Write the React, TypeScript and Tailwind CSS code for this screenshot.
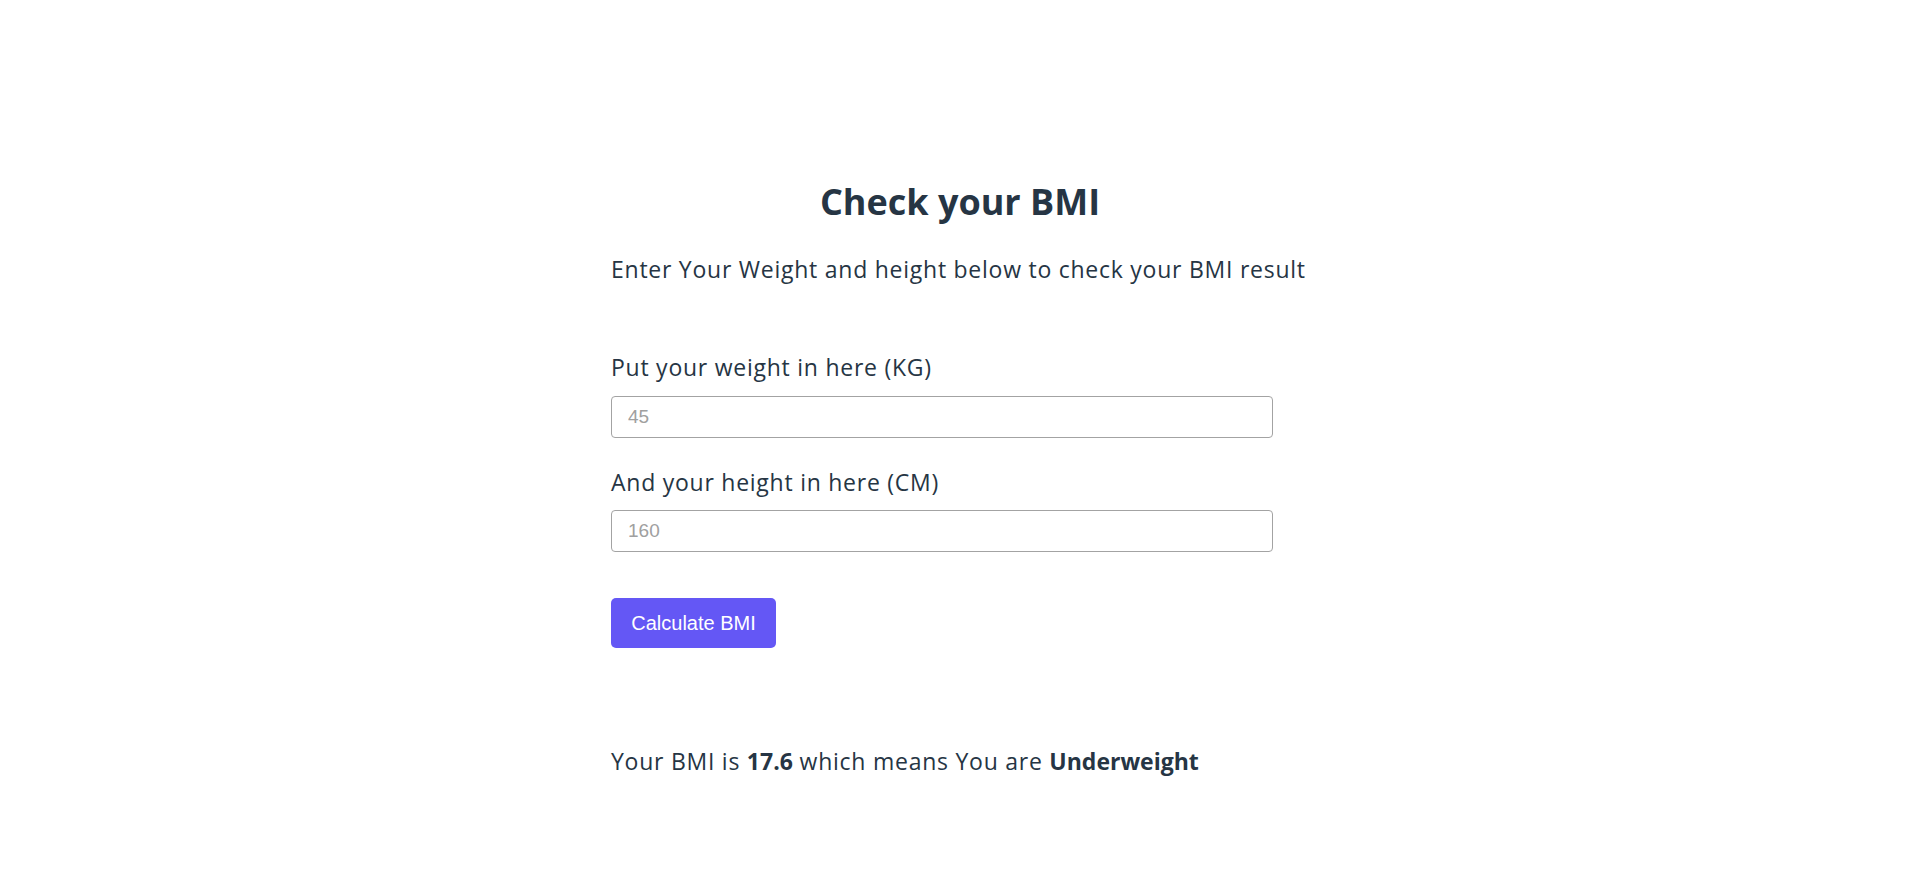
import { useState } from "react";

export default function App() {
  const [weight, setWeight] = useState("");
  const [height, setHeight] = useState("");

  return (
    <div className="min-h-screen bg-white text-[#263544] font-['Open_Sans',sans-serif]">
      <div className="mx-auto w-[698px] pt-[180px]">
        <h1 className="text-center text-[36px] leading-[44px] font-bold">Check your BMI</h1>
        <p className="mt-[29px] text-[23px] leading-[32px] tracking-[0.75px]">
          Enter Your Weight and height below to check your BMI result
        </p>

        <form className="mt-[66px] flex flex-col" onSubmit={(e) => e.preventDefault()}>
          <label className="text-[23px] leading-[32px] tracking-[0.75px]">Put your weight in here (KG)</label>
          <input
            value={weight}
            onChange={(e) => setWeight(e.target.value)}
            placeholder="45"
            className="mt-[13px] h-[42px] w-[662px] rounded-[4px] border border-[#a3a3a3] px-4 font-['Liberation_Sans',sans-serif] text-[19px] placeholder:text-[#a0a0a0] outline-none"
          />

          <label className="mt-[28px] text-[23px] leading-[32px] tracking-[0.75px]">And your height in here (CM)</label>
          <input
            value={height}
            onChange={(e) => setHeight(e.target.value)}
            placeholder="160"
            className="mt-[12px] h-[42px] w-[662px] rounded-[4px] border border-[#a3a3a3] px-4 font-['Liberation_Sans',sans-serif] text-[19px] placeholder:text-[#a0a0a0] outline-none"
          />

          <button
            type="submit"
            className="mt-[46px] h-[50px] w-[165px] rounded-[5px] bg-[#6457f5] font-['Liberation_Sans',sans-serif] text-[20px] text-white"
          >
            Calculate BMI
          </button>
        </form>

        <p className="mt-[97px] text-[23px] leading-[32px] tracking-[0.75px]">
          Your BMI is <b className="tracking-normal">17.6</b> which means You are{" "}
          <b className="tracking-normal">Underweight</b>
        </p>
      </div>
    </div>
  );
}
